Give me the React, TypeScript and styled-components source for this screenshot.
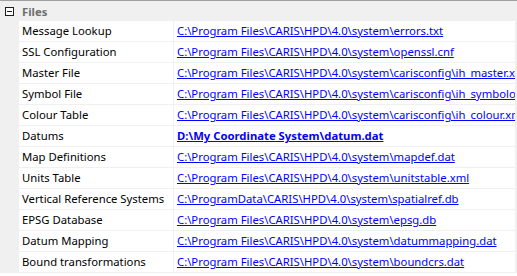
import styled, { createGlobalStyle } from 'styled-components';

type Entry = {
  label: string;
  path: string;
  bold?: boolean;
};

const entries: Entry[] = [
  { label: 'Message Lookup', path: 'C:\\Program Files\\CARIS\\HPD\\4.0\\system\\errors.txt' },
  { label: 'SSL Configuration', path: 'C:\\Program Files\\CARIS\\HPD\\4.0\\system\\openssl.cnf' },
  { label: 'Master File', path: 'C:\\Program Files\\CARIS\\HPD\\4.0\\system\\carisconfig\\ih_master.xml' },
  { label: 'Symbol File', path: 'C:\\Program Files\\CARIS\\HPD\\4.0\\system\\carisconfig\\ih_symbology.xml' },
  { label: 'Colour Table', path: 'C:\\Program Files\\CARIS\\HPD\\4.0\\system\\carisconfig\\ih_colour.xml' },
  { label: 'Datums', path: 'D:\\My Coordinate System\\datum.dat', bold: true },
  { label: 'Map Definitions', path: 'C:\\Program Files\\CARIS\\HPD\\4.0\\system\\mapdef.dat' },
  { label: 'Units Table', path: 'C:\\Program Files\\CARIS\\HPD\\4.0\\system\\unitstable.xml' },
  { label: 'Vertical Reference Systems', path: 'C:\\ProgramData\\CARIS\\HPD\\4.0\\system\\spatialref.db' },
  { label: 'EPSG Database', path: 'C:\\Program Files\\CARIS\\HPD\\4.0\\system\\epsg.db' },
  { label: 'Datum Mapping', path: 'C:\\Program Files\\CARIS\\HPD\\4.0\\system\\datummapping.dat' },
  { label: 'Bound transformations', path: 'C:\\Program Files\\CARIS\\HPD\\4.0\\system\\boundcrs.dat' },
];

function App() {
  return (
    <>
      <GlobalStyle />
      <Grid>
        <Category>
          <Toggle />
          <CategoryName>Files</CategoryName>
        </Category>
        <Rows>
          {entries.map((e) => (
            <Row key={e.label}>
              <Label>{e.label}</Label>
              <Value>
                <Link href="#" $bold={e.bold}>
                  {e.path}
                </Link>
              </Value>
            </Row>
          ))}
        </Rows>
      </Grid>
    </>
  );
}

export default App;

const GlobalStyle = createGlobalStyle`
  body {
    margin: 0;
    background: #ffffff;
    font-family: 'Segoe UI', 'Noto Sans', sans-serif;
    font-size: 11.3px;
  }
`;

const Grid = styled.div`
  width: 517px;
  border-top: 1px solid #a0a0a0;
  background: #f0f0f0;
`;

const Category = styled.div`
  height: 20px;
  display: flex;
  align-items: center;
`;

const Toggle = styled.span`
  position: relative;
  box-sizing: border-box;
  width: 9px;
  height: 9px;
  margin: 0 8px 0 5px;
  border: 1px solid #1e1e1e;
  background: #ffffff;

  &::after {
    content: '';
    position: absolute;
    left: 1px;
    top: 3px;
    width: 5px;
    height: 1px;
    background: #1e1e1e;
  }
`;

const CategoryName = styled.span`
  font-weight: 700;
  color: #6d6d6d;
`;

const Rows = styled.div`
  display: flex;
  flex-direction: column;
  gap: 1px;
  padding: 0 2px 1px 19px;
`;

const Row = styled.div`
  display: grid;
  grid-template-columns: 154px 341px;
  column-gap: 1px;
  height: 20px;
`;

const Label = styled.div`
  background: #ffffff;
  color: #000000;
  padding-left: 3px;
  line-height: 20px;
  white-space: nowrap;
  overflow: hidden;
`;

const Value = styled.div`
  background: #ffffff;
  padding-left: 3px;
  line-height: 20px;
  white-space: nowrap;
  overflow: hidden;
`;

const Link = styled.a<{ $bold?: boolean }>`
  color: #0000ff;
  text-decoration: underline;
  font-weight: ${(p) => (p.$bold ? 700 : 400)};
`;
